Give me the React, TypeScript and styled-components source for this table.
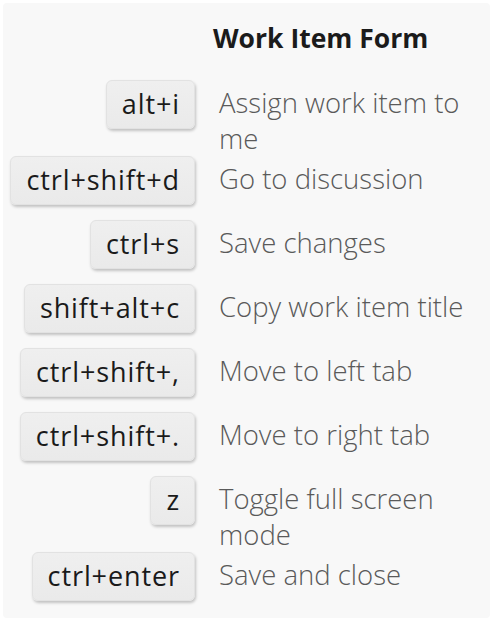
import React from "react";
import styled, { createGlobalStyle } from "styled-components";

const Global = createGlobalStyle`
  html, body { margin: 0; padding: 0; background: #ffffff; }
  body { font-family: "Open Sans", "Noto Sans", sans-serif; }
`;

const Card = styled.div`
  margin: 3px 0 0 3px;
  width: 487px;
  height: 615px;
  box-sizing: border-box;
  background: #f8f8f8;
  border-radius: 4px;
  display: grid;
  grid-template-columns: 192px 1fr;
  column-gap: 24px;
  align-content: start;
  padding-right: 10px;
`;

const Title = styled.h2`
  grid-column: 2;
  margin: 17px 0 24px -6px;
  font-family: "Open Sans", sans-serif;
  font-weight: 700;
  font-size: 26.5px;
  line-height: 36px;
  color: #1b1b1b;
`;

const KeyCell = styled.div<{ $tall?: boolean }>`
  grid-column: 1;
  display: flex;
  justify-content: flex-end;
  align-items: flex-start;
  min-height: ${(p) => (p.$tall ? 76 : 64)}px;
`;

const Key = styled.kbd`
  display: inline-block;
  box-sizing: border-box;
  height: 49px;
  padding: 0 14px 0 15px;
  line-height: 46px;
  font-family: "Open Sans", sans-serif;
  font-size: 27px;
  letter-spacing: 0.9px;
  color: #1a1a1a;
  background: linear-gradient(#efefef, #eaeaea);
  border: 1px solid #e2e2e2;
  border-radius: 6px;
  box-shadow: 1px 2px 3px rgba(0, 0, 0, 0.22);
`;

const Desc = styled.div`
  grid-column: 2;
  padding-top: 5px;
  font-family: "Open Sans", sans-serif;
  font-weight: 300;
  font-size: 27.5px;
  line-height: 35.5px;
  color: #5a5a5a;
`;

const shortcuts: { keys: string; desc: string; tall?: boolean }[] = [
  { keys: "alt+i", desc: "Assign work item to me", tall: true },
  { keys: "ctrl+shift+d", desc: "Go to discussion" },
  { keys: "ctrl+s", desc: "Save changes" },
  { keys: "shift+alt+c", desc: "Copy work item title" },
  { keys: "ctrl+shift+,", desc: "Move to left tab" },
  { keys: "ctrl+shift+.", desc: "Move to right tab" },
  { keys: "z", desc: "Toggle full screen mode", tall: true },
  { keys: "ctrl+enter", desc: "Save and close" },
];

export default function App() {
  return (
    <>
      <Global />
      <Card>
        <Title>Work Item Form</Title>
        {shortcuts.map((s) => (
          <React.Fragment key={s.keys}>
            <KeyCell $tall={s.tall}>
              <Key>{s.keys}</Key>
            </KeyCell>
            <Desc>{s.desc}</Desc>
          </React.Fragment>
        ))}
      </Card>
    </>
  );
}
